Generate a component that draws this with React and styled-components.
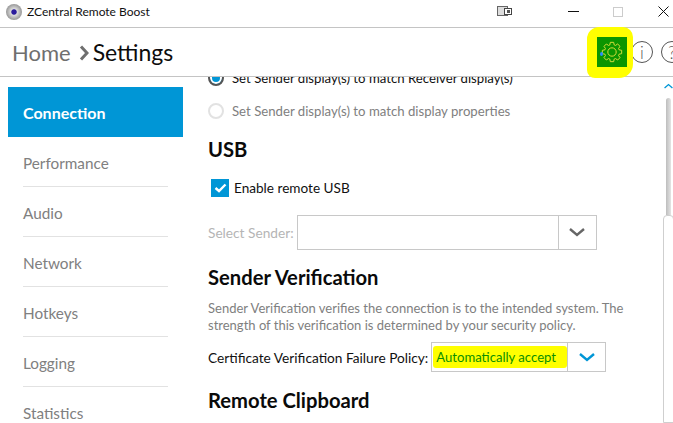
import React from "react";
import styled, { createGlobalStyle } from "styled-components";

const Global = createGlobalStyle`
  html, body {
    margin: 0;
    padding: 0;
    background: #fff;
    overflow: hidden;
  }
  * { box-sizing: border-box; }
`;

const Window = styled.div`
  position: relative;
  width: 673px;
  height: 423px;
  display: flex;
  flex-direction: column;
  overflow: hidden;
  font-family: Lato, "Open Sans", sans-serif;
  color: #111;
`;

const TitleBar = styled.div`
  height: 28px;
  flex: none;
  display: flex;
  align-items: center;
  padding: 0 2px 4px 6px;
  border-bottom: 1px solid #c4c4c4;
`;

const AppIcon = styled.div`
  width: 16px;
  height: 16px;
  border-radius: 50%;
  background: radial-gradient(circle, #2a1a9c 0 20%, #ddd 28%, #a8a8a8 60%, #6e6e6e 100%);
`;

const AppTitle = styled.span`
  margin-left: 5px;
  font-size: 12px;
  flex: 1;
`;

const WinButton = styled.div`
  width: 16px;
  height: 16px;
  display: flex;
  align-items: center;
  justify-content: center;
  margin-left: ${(p) => p.$gap}px;
`;

const Header = styled.div`
  height: 49px;
  flex: none;
  display: flex;
  align-items: center;
  padding-left: 12px;
  border-bottom: 1px solid #c4c4c4;
`;

const Crumb = styled.span`
  font-size: ${(p) => (p.$active ? 23 : 22)}px;
  color: ${(p) => (p.$active ? "#0c0c0c" : "#6f6f6f")};
`;

const CrumbArrow = styled.svg`
  width: 10px;
  height: 16px;
  margin: 2px 4px 0 8px;
`;

const HeaderTools = styled.div`
  margin-left: auto;
  display: flex;
  align-items: center;
  margin-right: -18px;
`;

const GearBox = styled.div`
  width: 30px;
  height: 30px;
  background: #0b9500;
  display: flex;
  align-items: center;
  justify-content: center;
  position: relative;
  z-index: 1;
  margin-right: 4px;
`;

const BlueDot = styled.span`
  position: absolute;
  left: 3px;
  top: 15px;
  width: 3px;
  height: 4px;
  border-radius: 50%;
  background: #2a8cff;
`;

const RoundIcon = styled.div`
  width: 22px;
  height: 22px;
  border: 1.5px solid #555;
  border-radius: 50%;
  display: flex;
  align-items: center;
  justify-content: center;
  font-size: 17px;
  font-weight: 300;
  color: #555;
  margin-right: 8px;
  flex: none;
`;

const YellowBlob = styled.div`
  position: absolute;
  left: 587px;
  top: 27px;
  width: 46px;
  height: 51px;
  background: #ffff00;
  border-radius: 12px 10px 14px 8px;
`;

const Main = styled.div`
  flex: 1;
  display: flex;
  min-height: 0;
`;

const Sidebar = styled.nav`
  width: 175px;
  margin: 10px 0 0 8px;
  flex: none;
`;

const NavItem = styled.div`
  height: 50px;
  display: flex;
  align-items: center;
  margin: ${(p) => (p.$active ? "0" : "0 15px")};
  padding: ${(p) => (p.$active ? "0 0 0 15px" : "2px 0 0")};
  font-size: ${(p) => (p.$active ? 16 : 15.3)}px;
  font-weight: ${(p) => (p.$active ? 700 : 400)};
  color: ${(p) => (p.$active ? "#fff" : "#808080")};
  background: ${(p) => (p.$active ? "#0096d6" : "transparent")};
  border-bottom: ${(p) => (p.$line ? "1px solid #e2e2e2" : "none")};
`;

const Content = styled.div`
  flex: 1;
  overflow: hidden;
  padding: 0 0 0 25px;
  min-width: 0;
`;

const RadioRow = styled.div`
  height: 24px;
  display: flex;
  align-items: center;
  font-size: 13.2px;
  color: ${(p) => (p.$muted ? "#808080" : "#111")};
  margin-top: ${(p) => (p.$first ? "-11px" : "9px")};
`;

const Radio = styled.span`
  width: 16px;
  height: 16px;
  border-radius: 50%;
  border: ${(p) => (p.$on ? "2px solid #555" : "2px solid #e2e2e2")};
  margin-right: 8px;
  flex: none;
  background: ${(p) => (p.$on ? "#0096d6" : "#fff")};
  box-shadow: ${(p) => (p.$on ? "inset 0 0 0 2px #fff" : "none")};
`;

const SectionTitle = styled.h2`
  margin: ${(p) => p.$top}px 0 0;
  font-size: 20.2px;
  line-height: 26px;
  font-weight: 700;
  color: #0a0a0a;
`;

const CheckRow = styled.label`
  display: flex;
  align-items: center;
  margin: 17px 0 0 3px;
  font-size: 13.6px;
`;

const CheckBox = styled.span`
  width: 18px;
  height: 18px;
  background: #0096d6;
  display: flex;
  align-items: center;
  justify-content: center;
  margin-right: 5px;
`;

const FieldRow = styled.div`
  display: flex;
  align-items: center;
  margin-top: ${(p) => p.$top}px;
`;

const FieldLabel = styled.span`
  font-size: 13.7px;
  margin-right: 3px;
  color: ${(p) => (p.$muted ? "#b5b5b5" : "#111")};
`;

const Select = styled.div`
  width: ${(p) => p.$w}px;
  height: ${(p) => p.$h}px;
  border: 1px solid #c8c8c8;
  display: flex;
`;

const SelectValue = styled.div`
  flex: 1;
  position: relative;
  padding-left: 4px;
  display: flex;
  align-items: center;
`;

const Highlight = styled.span`
  position: absolute;
  left: 1px;
  top: 3px;
  width: 134px;
  height: 22px;
  background: #ffff00;
  border-radius: 3px;
`;

const HighlightText = styled.span`
  position: relative;
  font-size: 13.1px;
  color: #0b8f00;
`;

const SelectArrow = styled.div`
  width: 38px;
  flex: none;
  border-left: 1px solid #c8c8c8;
  display: flex;
  align-items: center;
  justify-content: center;
`;

const Description = styled.p`
  margin: 10px 0 0;
  width: 430px;
  font-size: 13px;
  line-height: 17px;
  color: #808080;
`;

const Scrollbar = styled.div`
  width: 11px;
  margin-right: -1px;
  flex: none;
  display: flex;
  flex-direction: column;
  align-items: center;
  padding-top: 6px;
`;

const ScrollTrack = styled.div`
  width: 5px;
  height: 117px;
  margin-top: 9px;
  flex: none;
  border-radius: 3px 3px 0 0;
  background: linear-gradient(to right, #bdbdbd, #e4e4e4);
`;

const ScrollThumb = styled.div`
  width: 11px;
  flex: 1;
  border: 1px solid #cfcfcf;
  border-radius: 4px 4px 0 0;
  background: #fff;
`;

const Chevron = ({ color, width = 16, height = 9, sw = 2.4, up }) => (
  <svg width={width} height={height} viewBox="0 0 16 9">
    <path
      d={up ? "M1 8L8 2L15 8" : "M1 1L8 7L15 1"}
      fill="none"
      stroke={color}
      strokeWidth={sw}
    />
  </svg>
);

// 8 chunky teeth, the points come from the angle of each tooth
const gearPoints = () => {
  const pts = [];
  for (let i = 0; i < 8; i++) {
    const a = (i * Math.PI) / 4;
    [[7.4, -0.3], [9.8, -0.17], [9.8, 0.17], [7.4, 0.3]].forEach(([r, d]) => {
      pts.push(`${(r * Math.cos(a + d)).toFixed(2)},${(r * Math.sin(a + d)).toFixed(2)}`);
    });
  }
  return pts.join(" ");
};

const GearIcon = () => (
  <svg width="22" height="22" viewBox="-11 -11 22 22">
    <polygon points={gearPoints()} fill="none" stroke="#d4dc3a" strokeWidth="1" />
    <circle r="4.2" fill="none" stroke="#d4dc3a" strokeWidth="1" />
  </svg>
);

const navItems = ["Performance", "Audio", "Network", "Hotkeys", "Logging", "Statistics"];

export default function App() {
  return (
    <Window>
      <Global />
      <TitleBar>
        <AppIcon />
        <AppTitle>ZCentral Remote Boost</AppTitle>
        <WinButton $gap={0}>
          <svg width="16" height="11" viewBox="0 0 16 11">
            <rect x="0.5" y="0.5" width="10" height="9" fill="#ddd" stroke="#666" />
            <rect x="7.5" y="2.5" width="7" height="6" fill="#fff" stroke="#444" />
            <rect x="10" y="4" width="3" height="3" fill="#555" />
          </svg>
        </WinButton>
        <WinButton $gap={52}>
          <svg width="11" height="2" viewBox="0 0 11 2">
            <rect width="11" height="1" fill="#111" />
          </svg>
        </WinButton>
        <WinButton $gap={29}>
          <svg width="10" height="10" viewBox="0 0 10 10">
            <rect x="0.5" y="0.5" width="9" height="9" fill="none" stroke="#ccc" />
          </svg>
        </WinButton>
        <WinButton $gap={29}>
          <svg width="11" height="11" viewBox="0 0 11 11">
            <path d="M0.5 0.5L10.5 10.5M10.5 0.5L0.5 10.5" stroke="#111" />
          </svg>
        </WinButton>
      </TitleBar>
      <YellowBlob />
      <Header>
        <Crumb>Home</Crumb>
        <CrumbArrow viewBox="0 0 10 16">
          <path d="M2 1.5L8 8L2 14.5" fill="none" stroke="#6f6f6f" strokeWidth="3" />
        </CrumbArrow>
        <Crumb $active>Settings</Crumb>
        <HeaderTools>
          <GearBox>
            <GearIcon />
            <BlueDot />
          </GearBox>
          <RoundIcon>i</RoundIcon>
          <RoundIcon>?</RoundIcon>
        </HeaderTools>
      </Header>
      <Main>
        <Sidebar>
          <NavItem $active>Connection</NavItem>
          {navItems.map((item, i) => (
            <NavItem key={item} $line={i < navItems.length - 1}>
              {item}
            </NavItem>
          ))}
        </Sidebar>
        <Content>
          <RadioRow $first>
            <Radio $on />
            Set Sender display(s) to match Receiver display(s)
          </RadioRow>
          <RadioRow $muted>
            <Radio />
            Set Sender display(s) to match display properties
          </RadioRow>
          <SectionTitle $top={13}>USB</SectionTitle>
          <CheckRow>
            <CheckBox>
              <svg width="13" height="10" viewBox="0 0 13 10">
                <path d="M1.5 5L5 8L11.5 1.5" fill="none" stroke="#fff" strokeWidth="2.4" />
              </svg>
            </CheckBox>
            Enable remote USB
          </CheckRow>
          <FieldRow $top={18}>
            <FieldLabel $muted>Select Sender:</FieldLabel>
            <Select $w={300} $h={35}>
              <SelectValue />
              <SelectArrow>
                <Chevron color="#666" />
              </SelectArrow>
            </Select>
          </FieldRow>
          <SectionTitle $top={14}>Sender Verification</SectionTitle>
          <Description>
            Sender Verification verifies the connection is to the intended system. The strength of
            this verification is determined by your security policy.
          </Description>
          <FieldRow $top={8}>
            <FieldLabel>Certificate Verification Failure Policy:</FieldLabel>
            <Select $w={175} $h={30}>
              <SelectValue>
                <Highlight />
                <HighlightText>Automatically accept</HighlightText>
              </SelectValue>
              <SelectArrow>
                <Chevron color="#0096d6" />
              </SelectArrow>
            </Select>
          </FieldRow>
          <SectionTitle $top={15}>Remote Clipboard</SectionTitle>
        </Content>
        <Scrollbar>
          <Chevron color="#0096d6" width={9} height={6} up />
          <ScrollTrack />
          <ScrollThumb />
        </Scrollbar>
      </Main>
    </Window>
  );
}
